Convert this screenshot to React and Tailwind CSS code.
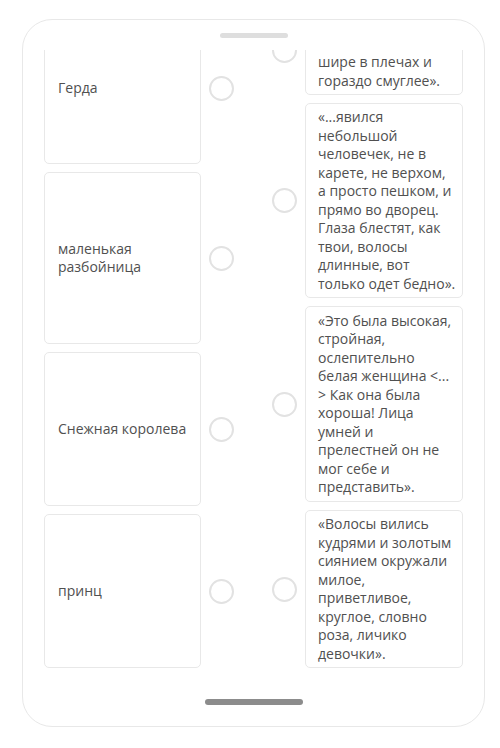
const names = [
  { label: "Герда", h: "h-[152px]" },
  { label: "маленькая разбойница", h: "h-[172px]" },
  { label: "Снежная королева", h: "h-[154px]" },
  { label: "принц", h: "h-[154px]" },
];

// the first quote is scrolled past, only its tail is in view
const quotes = [
  {
    h: "h-[89px]",
    tail: true,
    lines: ["шире в плечах и", "гораздо смуглее»."],
  },
  {
    h: "h-[195px]",
    lines: [
      "«...явился",
      "небольшой",
      "человечек, не в",
      "карете, не верхом,",
      "а просто пешком, и",
      "прямо во дворец.",
      "Глаза блестят, как",
      "твои, волосы",
      "длинные, вот",
      "только одет бедно».",
    ],
  },
  {
    h: "h-[196px]",
    lines: [
      "«Это была высокая,",
      "стройная,",
      "ослепительно",
      "белая женщина <...",
      "> Как она была",
      "хороша! Лица",
      "умней и",
      "прелестней он не",
      "мог себе и",
      "представить».",
    ],
  },
  {
    h: "h-[158px]",
    lines: [
      "«Волосы вились",
      "кудрями и золотым",
      "сиянием окружали",
      "милое,",
      "приветливое,",
      "круглое, словно",
      "роза, личико",
      "девочки».",
    ],
  },
];

function Radio() {
  return (
    <div className="w-[25px] h-[25px] shrink-0 rounded-full border-2 border-[#e2e2e2] bg-white" />
  );
}

export default function App() {
  return (
    <div
      className="w-[500px] h-[748px] bg-white pl-[22px] pr-[15px] pt-[19px] pb-[21px] text-[14px] text-[#505050]"
      style={{ fontFamily: '"Open Sans", "Noto Sans", sans-serif' }}
    >
      <div className="h-full flex flex-col items-center border border-[#e8e8e8] rounded-[30px]">
        {/* top grabber */}
        <div className="mt-[13px] w-[68px] h-[5px] rounded-full bg-[#dedede]" />

        {/* scrolled list */}
        <div className="mt-[12px] h-[626px] w-full overflow-hidden px-[21px]">
          <div className="-mt-[44px] flex gap-[38px]">
            {/* names */}
            <div className="w-[190px] pt-[6px] flex flex-col gap-[8px]">
              {names.map((n) => (
                <div key={n.label} className="flex items-center gap-[8px]">
                  <div
                    className={`w-[157px] ${n.h} flex items-center px-[13px] border border-[#e8e8e8] rounded-[5px] leading-[18.5px]`}
                  >
                    {n.label}
                  </div>
                  <Radio />
                </div>
              ))}
            </div>

            {/* quotes */}
            <div className="w-[191px] flex flex-col gap-[8px]">
              {quotes.map((q, i) => (
                <div key={i} className="flex items-center gap-[8px]">
                  <Radio />
                  <div
                    className={`w-[158px] ${q.h} flex flex-col ${
                      q.tail ? "justify-end pb-[4px]" : "justify-center"
                    } pl-[12px] pr-[6px] border border-[#e8e8e8] rounded-[5px] leading-[18.5px]`}
                  >
                    {q.lines.map((l) => (
                      <div key={l} className="whitespace-nowrap">
                        {l}
                      </div>
                    ))}
                  </div>
                </div>
              ))}
            </div>
          </div>
        </div>

        {/* bottom home bar */}
        <div className="mt-[23px] w-[98px] h-[6px] rounded-full bg-[#8c8c8c]" />
      </div>
    </div>
  );
}
